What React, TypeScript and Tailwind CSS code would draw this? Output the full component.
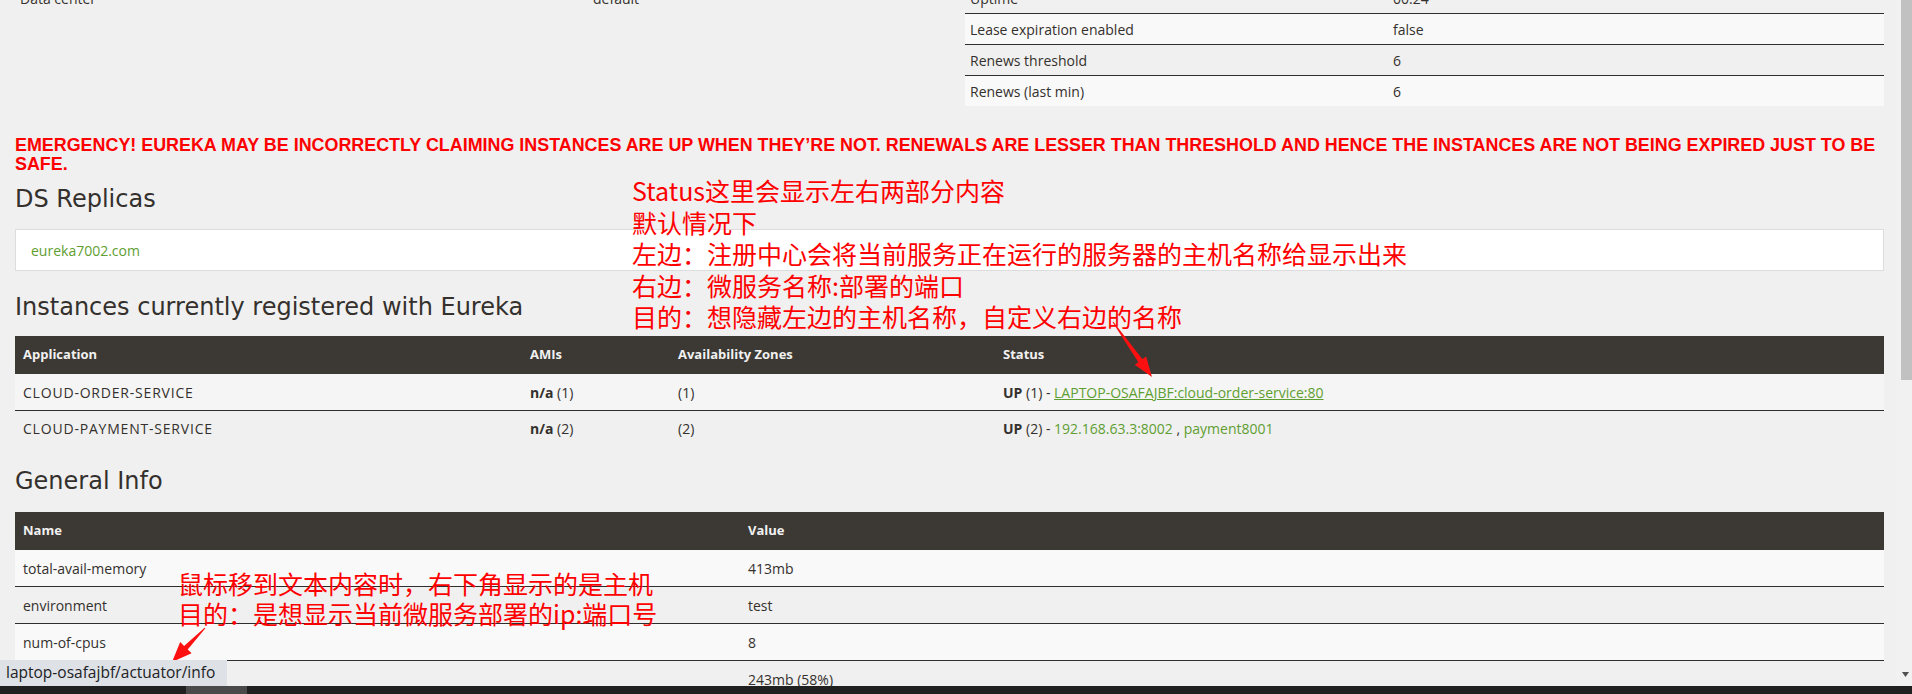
const TOP_LEFT = [
  ['Environment', 'test'],
  ['Data center', 'default'],
];

const TOP_RIGHT = [
  ['Current time', '2020-03-18T21:42:16 +0800'],
  ['Uptime', '00:24'],
  ['Lease expiration enabled', 'false'],
  ['Renews threshold', '6'],
  ['Renews (last min)', '6'],
];

const GENERAL_INFO = [
  ['total-avail-memory', '413mb'],
  ['environment', 'test'],
  ['num-of-cpus', '8'],
  ['current-memory-usage', '243mb (58%)'],
];

function InfoTable({
  rows,
  firstCol,
}: {
  rows: string[][];
  firstCol: string;
}) {
  return (
    <div className="text-[14px] text-[#34302d]">
      {rows.map(([name, value], i) => (
        <div
          key={name}
          className={`flex h-[31px] items-center ${i > 0 ? 'border-t border-[#2e2e2e]' : ''} ${i % 2 === 0 ? 'bg-[#f9f9f9]' : ''}`}
        >
          <div className={`${firstCol} shrink-0 px-[5px]`}>{name}</div>
          <div className="px-[5px]">{value}</div>
        </div>
      ))}
    </div>
  );
}

function Heading({ children }: { children: string }) {
  return (
    <h2 className="font-['DejaVu_Sans',sans-serif] text-[24px] leading-[30px] text-[#34302d]">
      {children}
    </h2>
  );
}

function TableHead({ cols }: { cols: [string, string][] }) {
  return (
    <div className="flex h-[38px] items-center bg-[#3c3833] text-[13px] font-bold text-[#f1f1f1]">
      {cols.map(([label, w]) => (
        <div key={label} className={`${w} px-[8px]`}>
          {label}
        </div>
      ))}
    </div>
  );
}

function Instances() {
  return (
    <div className="text-[14px] text-[#34302d]">
      <TableHead
        cols={[
          ['Application', 'w-[507px]'],
          ['AMIs', 'w-[148px]'],
          ['Availability Zones', 'w-[325px]'],
          ['Status', 'flex-1'],
        ]}
      />
      <div className="flex h-[36px] items-center bg-[#f5f5f5]">
        <div className="w-[507px] px-[8px] tracking-[0.8px]">CLOUD-ORDER-SERVICE</div>
        <div className="w-[148px] px-[8px]">
          <b>n/a</b> (1)
        </div>
        <div className="w-[325px] px-[8px]">(1)</div>
        <div className="flex-1 px-[8px]">
          <b>UP</b> (1) -{' '}
          <a className="text-[#5f9e32] underline">
            LAPTOP-OSAFAJBF:cloud-order-service:80
          </a>
        </div>
      </div>
      <div className="flex h-[36px] items-center border-t border-[#2e2e2e]">
        <div className="w-[507px] px-[8px] tracking-[0.8px]">CLOUD-PAYMENT-SERVICE</div>
        <div className="w-[148px] px-[8px]">
          <b>n/a</b> (2)
        </div>
        <div className="w-[325px] px-[8px]">(2)</div>
        <div className="flex-1 px-[8px]">
          <b>UP</b> (2) -{' '}
          <a className="text-[#5f9e32]">192.168.63.3:8002</a> ,{' '}
          <a className="text-[#5f9e32]">payment8001</a>
        </div>
      </div>
    </div>
  );
}

function GeneralInfo() {
  return (
    <div className="text-[14px] text-[#34302d]">
      <TableHead
        cols={[
          ['Name', 'w-[725px]'],
          ['Value', 'flex-1'],
        ]}
      />
      {GENERAL_INFO.map(([name, value], i) => (
        <div
          key={name}
          className={`flex items-center ${i > 0 ? 'h-[37px] border-t border-[#2e2e2e]' : 'h-[36px]'} ${i % 2 === 0 ? 'bg-[#f9f9f9]' : ''}`}
        >
          <div className="w-[725px] px-[8px]">{name}</div>
          <div className="px-[8px]">{value}</div>
        </div>
      ))}
    </div>
  );
}

function Arrows() {
  return (
    <svg
      className="pointer-events-none absolute left-0 top-0"
      width="1912"
      height="694"
      viewBox="0 0 1912 694"
    >
      <polygon
        fill="#ff1010"
        points="1112.6,322.3 1138.4,362.2 1134.7,364.8 1152,377 1146.1,356.6 1142.4,359.3 1113.4,321.7"
      />
      <polygon
        fill="#ff1010"
        points="204.6,627.7 184.1,645.9 180.2,642.1 172,662 191.6,653.3 187.7,649.4 205.4,628.3"
      />
    </svg>
  );
}

export default function App() {
  return (
    <div className="relative flex h-[694px] w-[1912px] overflow-hidden bg-[#f0f0f0] font-['Open_Sans','Noto_Sans',sans-serif]">
      <main className="flex-1 pl-[15px] pr-[11px]">
        <div className="-mt-[49px] grid grid-cols-[935px_1fr] gap-[15px]">
          <InfoTable rows={TOP_LEFT} firstCol="w-[573px]" />
          <InfoTable rows={TOP_RIGHT} firstCol="w-[423px]" />
        </div>

        <p className="mt-[30px] whitespace-nowrap font-['Liberation_Sans',sans-serif] text-[17.9px] font-bold leading-[19px] text-[#ff0000]">
          EMERGENCY! EUREKA MAY BE INCORRECTLY CLAIMING INSTANCES ARE UP WHEN
          THEY’RE NOT. RENEWALS ARE LESSER THAN THRESHOLD AND HENCE THE
          INSTANCES ARE NOT BEING EXPIRED JUST TO BE
          <br />
          SAFE.
        </p>

        <div className="mt-[10px]">
          <Heading>DS Replicas</Heading>
        </div>
        <div className="mt-[15px] flex h-[42px] items-center border border-[#dddddd] bg-white px-[15px] text-[14px]">
          <a className="text-[#5f9e32]">eureka7002.com</a>
        </div>

        <div className="mt-[21px]">
          <Heading>Instances currently registered with Eureka</Heading>
        </div>
        <div className="mt-[14px]">
          <Instances />
        </div>

        <div className="mt-[20px]">
          <Heading>General Info</Heading>
        </div>
        <div className="mt-[16px]">
          <GeneralInfo />
        </div>
      </main>

      <div className="relative w-[17px] bg-[#f1f1f1]">
        <div className="ml-[6px] h-[380px] bg-[#c1c1c1]" />
        <svg
          className="absolute left-[7px] top-[672px]"
          width="7"
          height="5"
          viewBox="0 0 7 5"
        >
          <polygon points="0,0 7,0 3.5,5" fill="#505050" />
        </svg>
      </div>

      <div className="absolute left-[632px] top-[175px] font-['Noto_Sans_CJK_SC',sans-serif] text-[25px] leading-[31.5px] text-[#ff0000]">
        <div>Status这里会显示左右两部分内容</div>
        <div>默认情况下</div>
        <div>左边：注册中心会将当前服务正在运行的服务器的主机名称给显示出来</div>
        <div>右边：微服务名称:部署的端口</div>
        <div>目的：想隐藏左边的主机名称，自定义右边的名称</div>
      </div>

      <div className="absolute left-[178px] top-[568px] font-['Noto_Sans_CJK_SC',sans-serif] text-[25px] leading-[30px] text-[#ff0000]">
        <div>鼠标移到文本内容时，右下角显示的是主机</div>
        <div>目的：是想显示当前微服务部署的ip:端口号</div>
      </div>

      <Arrows />

      <div className="absolute left-0 top-[660px] flex h-[26px] w-[227px] items-center bg-[#dee1e6] pl-[6px] text-[15.5px] text-[#202124]">
        laptop-osafajbf/actuator/info
      </div>

      <div className="absolute bottom-0 left-0 h-[8px] w-[1912px] bg-[#202020]">
        <div className="ml-[186px] h-full w-[61px] bg-[#4a4a4a]" />
      </div>
    </div>
  );
}
